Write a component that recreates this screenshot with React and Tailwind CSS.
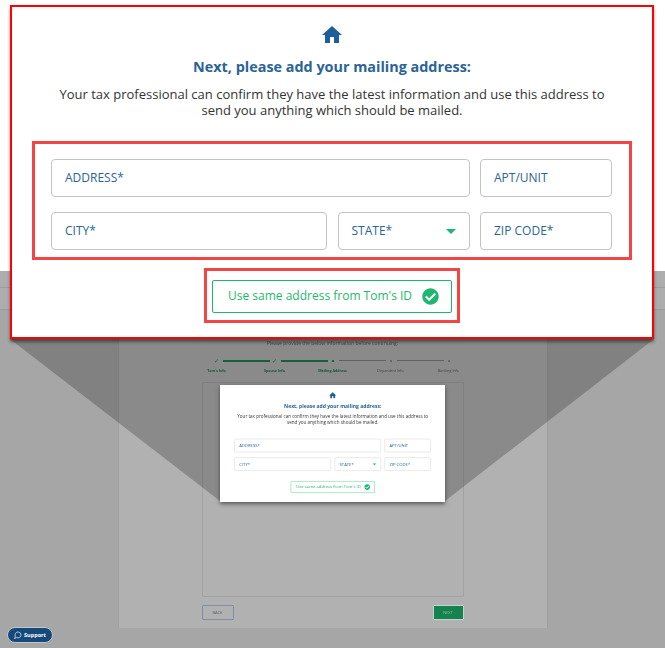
import React from "react";
import { MdHome } from "react-icons/md";
import { FaCheckCircle } from "react-icons/fa";
import { LuMessageCircle } from "react-icons/lu";

const font = { fontFamily: '"Open Sans", "Noto Sans", sans-serif' };

function Field({ label, className = "", caret = false }) {
  return (
    <div className={`h-[38px] rounded-[4px] border border-[#c4c4c4] bg-white flex items-center justify-between pl-[13px] pr-[13px] text-[12px] text-[#2a6496] ${className}`}>
      <span>{label}</span>
      {caret && <span className="w-0 h-0 border-l-[5px] border-r-[5px] border-t-[5px] border-l-transparent border-r-transparent border-t-[#1db870]" />}
    </div>
  );
}

function Card({ marked }) {
  const box = marked ? "border-[#f44545]" : "border-transparent";
  return (
    <div className={`w-[644px] h-[334px] bg-white border-2 flex flex-col items-center ${marked ? "border-[#ff0000]" : "border-white"}`} style={font}>
      <MdHome className="mt-[16px] text-[#1f5f99] w-[24px] h-[24px] shrink-0" />
      <h2 className="mt-[10px] text-[14.4px] leading-[20px] font-bold text-[#2a6496]">Next, please add your mailing address:</h2>
      <p className="mt-[9px] w-[550px] text-center text-[13px] leading-[16px] text-[#333333]">
        Your tax professional can confirm they have the latest information and use this address to send you anything which should be mailed.
      </p>
      <div className={`mt-[23px] w-[600px] h-[119px] border-[3px] ${box} pl-[16px] pt-[15px]`}>
        <div className="grid grid-cols-[276px_132px_132px] gap-x-[10.5px] gap-y-[15px]">
          <Field label="ADDRESS*" className="col-span-2" />
          <Field label="APT/UNIT" />
          <Field label="CITY*" />
          <Field label="STATE*" caret />
          <Field label="ZIP CODE*" />
        </div>
      </div>
      <div className={`mt-[8px] w-[256px] h-[55px] border-[3px] ${box} flex items-center justify-center pt-[1px]`}>
        <div className="w-[240px] h-[33px] rounded-[2px] border border-[#1db870] flex items-center justify-between pl-[15px] pr-[12px] text-[12px] text-[#1db870]">
          <span>Use same address from Tom's ID</span>
          <FaCheckCircle className="w-[17px] h-[17px] text-[#1db870]" />
        </div>
      </div>
    </div>
  );
}

function Step({ done, active, last, label }) {
  const green = done || active;
  return (
    <div className="w-[58px] flex flex-col items-center relative">
      <div className="h-[10px] flex items-center justify-center text-[6px] text-[#1c7a4d]">
        {done ? "✓" : <span className={`w-[2px] h-[2px] rounded-full ${active ? "bg-[#145c39]" : "bg-[#777777]"}`} />}
      </div>
      {!last && <span className={`absolute left-[35px] top-[4px] w-[47px] ${done ? "h-[1.5px] bg-[#1c7a4d]" : "h-px bg-[#7d7d7d]"}`} />}
      <span className={`mt-[2px] whitespace-nowrap text-[3.6px] leading-[6px] ${green ? "font-bold text-[#1c6e47]" : "text-[#555555]"}`}>{label}</span>
    </div>
  );
}

export default function App() {
  return (
    <div className="relative w-[665px] h-[648px] overflow-hidden bg-white" style={font}>
      <div className="h-[271px]" />
      <div className="h-[377px] bg-[#a6a6a6] flex flex-col">
        <div className="h-[17px] bg-[#adadad] border-b border-[#9c9c9c] shrink-0" />
        <div className="h-[22px] bg-[#adadad] border-b border-[#9c9c9c] shrink-0" />
        <div className="flex justify-center">
          <div className="w-[430px] h-[318px] bg-[#b1b1b1] border-x border-[#a0a0a0] flex flex-col items-center blur-[0.3px]">
            <p className="mt-[29px] text-[5px] leading-[8px] text-[#555555]">Please provide the below information before continuing:</p>
            <div className="mt-[9px] flex">
              <Step done label="Tom's Info" />
              <Step done label="Spouse Info" />
              <Step active label="Mailing Address" />
              <Step label="Dependent Info" />
              <Step last label="Banking Info" />
            </div>
            <div className="mt-[8px] w-[262px] h-[215px] border border-[#a2a2a2] rounded-[1px]" />
            <div className="mt-[8px] w-[262px] flex justify-between">
              <div className="w-[32px] h-[15px] border border-[#7f8fa3] rounded-[1px] flex items-center justify-center text-[4px] text-[#55606e]">BACK</div>
              <div className="w-[31px] h-[15px] bg-[#14834f] border border-[#c3d5cb] rounded-[1px] flex items-center justify-center text-[4px] text-[#8fbfa6]">NEXT</div>
            </div>
          </div>
        </div>
      </div>

      <svg className="absolute left-0 top-0 pointer-events-none" width="665" height="648" viewBox="0 0 665 648">
        <polygon points="10,339 654,339 445,501 220,501" fill="#000000" fillOpacity="0.22" />
      </svg>

      <div className="absolute left-[220px] top-[385px] w-[225px] h-[117px] bg-white shadow-[0_2px_4px_rgba(0,0,0,0.5)] overflow-hidden">
        <div className="origin-top-left scale-[0.35] blur-[0.8px]">
          <Card />
        </div>
      </div>

      <div className="absolute left-[10px] top-[5px] shadow-[0_3px_3px_rgba(0,0,0,0.45)]">
        <Card marked />
      </div>

      <div className="absolute left-[7px] top-[627px] w-[46px] h-[16px] rounded-full bg-[#164a7b] border border-[#c0c6cc] flex items-center justify-center gap-[2px] text-white text-[5.5px] font-bold">
        <LuMessageCircle className="w-[8px] h-[8px]" />
        <span>Support</span>
      </div>
    </div>
  );
}
